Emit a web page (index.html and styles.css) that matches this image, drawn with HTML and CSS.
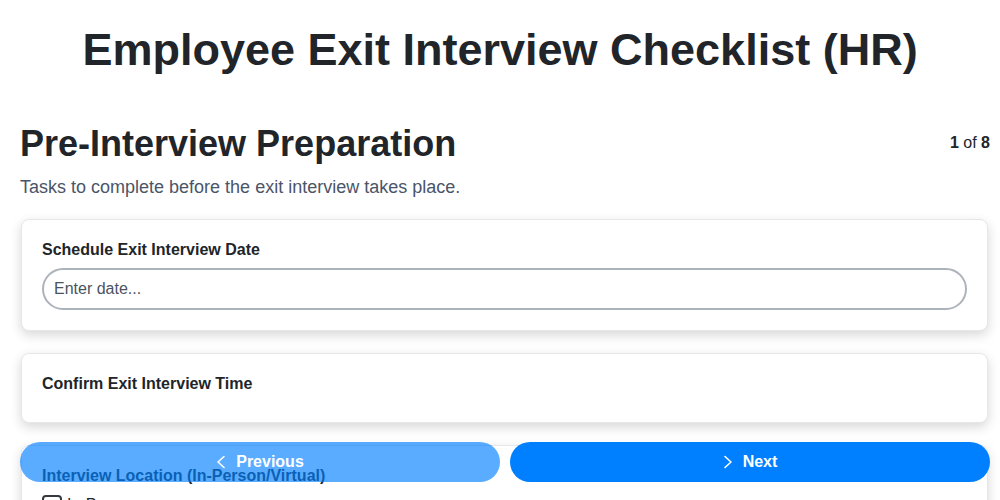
FILE: index.html
```html
<!DOCTYPE html>
<html lang="en">
<head>
<meta charset="utf-8">
<title>Employee Exit Interview Checklist (HR)</title>
<link rel="stylesheet" href="styles.css">
</head>
<body>
<div class="page">
  <h1 class="title">Employee Exit Interview Checklist (HR)</h1>
  <section class="step">
    <div class="step-head">
      <h2 class="step-title">Pre-Interview Preparation</h2>
      <div class="step-count"><b>1</b> of <b>8</b></div>
    </div>
    <p class="step-desc">Tasks to complete before the exit interview takes place.</p>
    <div class="cards">
      <div class="card">
        <label class="card-label" for="d1">Schedule Exit Interview Date</label>
        <input id="d1" class="field" type="text" placeholder="Enter date...">
      </div>
      <div class="card">
        <div class="card-label">Confirm Exit Interview Time</div>
      </div>
      <div class="card">
        <div class="card-label">Interview Location (In-Person/Virtual)</div>
        <label class="check"><span class="box"></span>In-Person</label>
        <label class="check"><span class="box"></span>Virtual</label>
      </div>
    </div>
  </section>
</div>
<nav class="nav">
  <button class="btn btn-prev" type="button">
    <svg class="chev" viewBox="0 0 10 16" width="10" height="16"><path d="M8 2.5 2 8l6 5.5" fill="none" stroke="currentColor" stroke-width="1.6" stroke-linecap="round" stroke-linejoin="round"/></svg>
    Previous
  </button>
  <button class="btn btn-next" type="button">
    <svg class="chev" viewBox="0 0 10 16" width="10" height="16"><path d="M2 2.5 8 8l-6 5.5" fill="none" stroke="currentColor" stroke-width="1.6" stroke-linecap="round" stroke-linejoin="round"/></svg>
    Next
  </button>
</nav>
</body>
</html>
```
FILE: styles.css
```css
* { box-sizing: border-box; }
html, body { margin: 0; padding: 0; background: #fff; }
body {
  font-family: "Liberation Sans", Arial, sans-serif;
  color: #212529;
}
.page {
  padding: 0 10px 0 20px;
}
.title {
  margin: 0 0 0 -10px;
  padding-top: 23px;
  font-size: 45px;
  line-height: 54px;
  font-weight: 700;
  text-align: center;
  color: #212529;
}
.step { margin-top: 45px; }
.step-head {
  display: flex;
  align-items: center;
  justify-content: space-between;
}
.step-title {
  margin: 0;
  font-size: 36px;
  line-height: 44px;
  font-weight: 700;
}
.step-count {
  font-size: 16px;
  line-height: 18px;
  margin-bottom: 2px;
  color: #212529;
}
.step-count b { font-weight: 700; }
.step-desc {
  margin: 10px 0 21px;
  font-size: 18px;
  line-height: 22px;
  color: #4a5568;
}
.cards {
  display: flex;
  flex-direction: column;
  gap: 22px;
  margin: 0 2px 0 1px;
}
.card {
  background: #fff;
  border: 1px solid #e6e7eb;
  border-radius: 8px;
  padding: 20px;
  box-shadow: 0 4px 12px rgba(0, 0, 0, 0.16);
  display: flex;
  flex-direction: column;
}
.card-label {
  display: block;
  font-size: 16px;
  line-height: 19px;
  font-weight: 700;
  margin-bottom: 9px;
  color: #212529;
}
.field {
  height: 42px;
  border: 2px solid #adb3bb;
  border-radius: 21px;
  padding: 0 10px;
  font-family: "Liberation Sans", Arial, sans-serif;
  font-size: 16px;
  color: #212529;
  outline: none;
}
.field::placeholder { color: #4b5360; }
.check {
  display: flex;
  align-items: center;
  gap: 5px;
  font-size: 16px;
  margin: 1px 0 8px;
}
.box {
  width: 20px;
  height: 20px;
  border: 2px solid #343a40;
  border-radius: 4px;
}
.nav {
  position: fixed;
  left: 20px;
  right: 10px;
  bottom: 18px;
  display: flex;
  gap: 10px;
}
.btn {
  flex: 1;
  height: 40px;
  border: 0;
  border-radius: 20px;
  background: #0080ff;
  color: #fff;
  font-family: "Liberation Sans", Arial, sans-serif;
  font-size: 16px;
  font-weight: 700;
  display: flex;
  align-items: center;
  justify-content: center;
  gap: 10px;
}
.btn-prev { opacity: 0.65; }
.chev { display: block; }
```
